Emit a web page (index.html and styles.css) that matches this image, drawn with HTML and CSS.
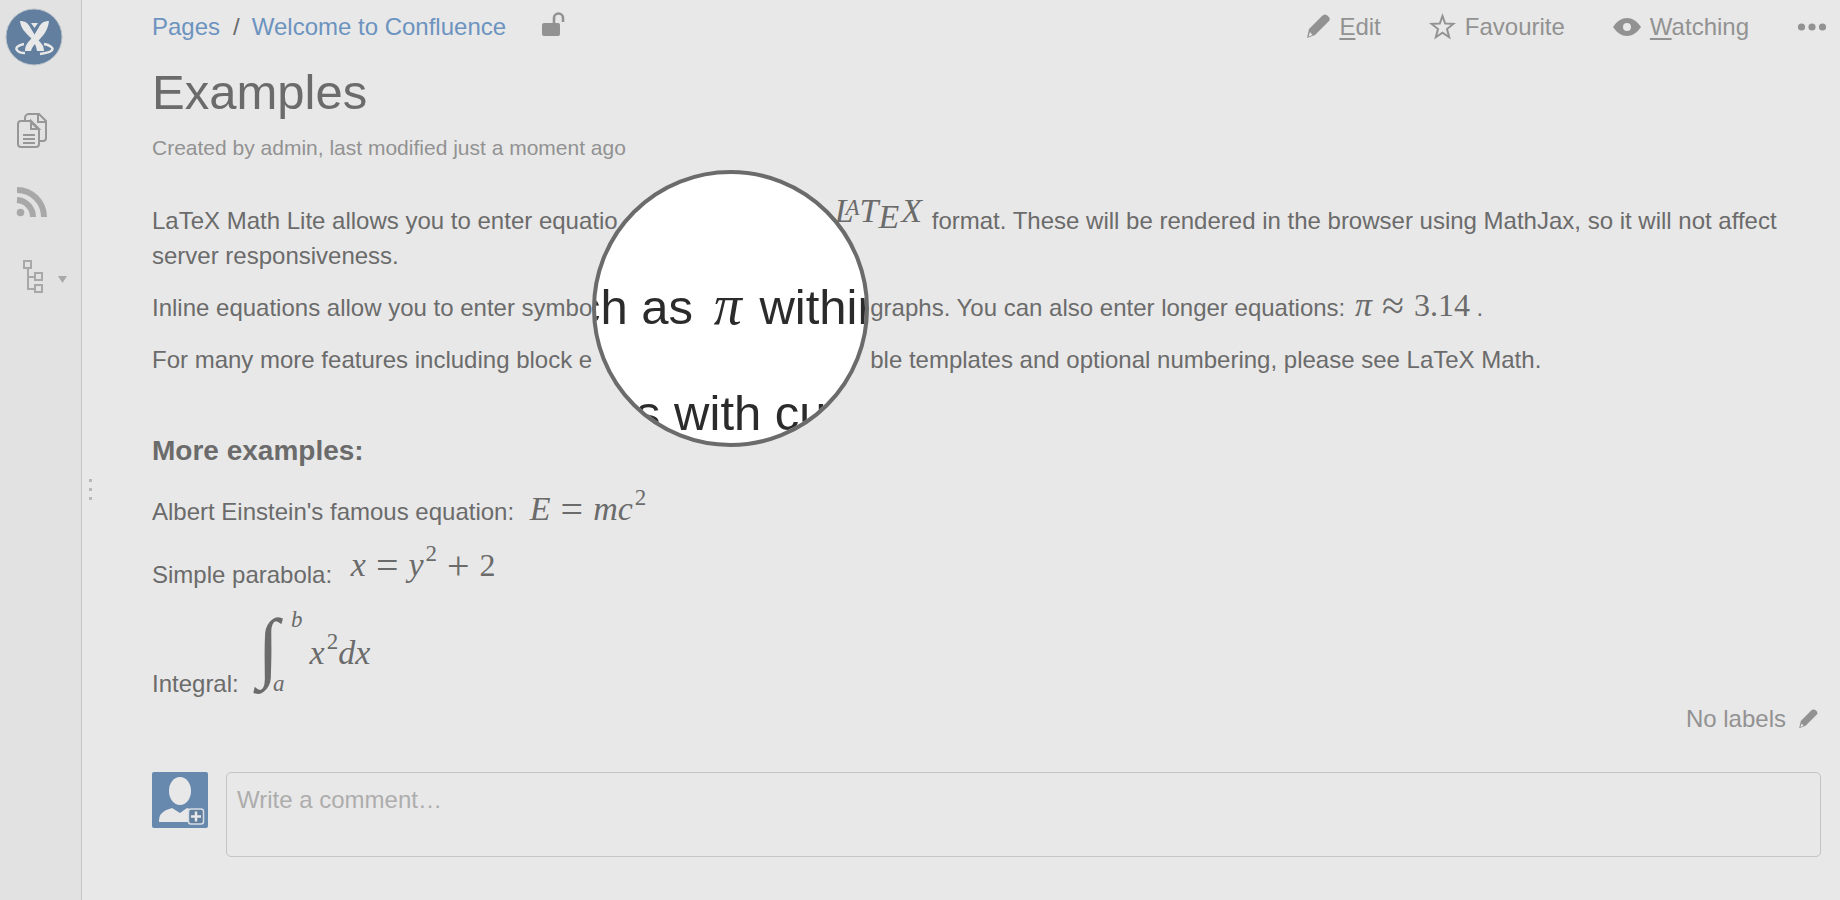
FILE: index.html
```html
<!DOCTYPE html>
<html lang="en">
<head>
<meta charset="utf-8">
<title>Examples</title>
<link rel="stylesheet" href="styles.css">
</head>
<body>
<div class="app">
  <nav class="sidebar" aria-label="Space">
    <a class="logo" href="#" aria-label="Space home">
      <svg width="58" height="58" viewBox="0 0 58 58"><circle cx="29" cy="29" r="28" fill="#627f9f" stroke="#b9c1ca"/><g fill="#e8e8e8"><path d="M15 13c5 0 8 2 10 6l6 10c4 6 8 7 8 14h-7c-1-6-3-9-6-13-6-6-10-9-11-17z"/><path d="M44 13c-5 0-8 2-10 6l-6 10c-5 5-8 8-8 14h6c1-4 3-6 6-9 7-7 11-12 12-21z"/><path d="M26 15h7l-3.500 5z"/></g><path d="M19 36c-6 1-9 4-7 6 1 2 4 3 8 3M39 36c6 1 10 4 8 6-1 2-5 3-12 4" fill="none" stroke="#e8e8e8" stroke-width="2.500"/></svg>
    </a>
    <a class="side-link" href="#" aria-label="Pages">
      <svg width="32" height="36" viewBox="0 0 32 36" fill="none" stroke="#979797" stroke-width="2"><path d="M14 8H5a3 3 0 0 0-3 3v20a3 3 0 0 0 3 3h15a3 3 0 0 0 3-3V17z"/><path d="M15 8v8h8zM9 8V5a4 4 0 0 1 4-4h10l7 7v17a3 3 0 0 1-3 3h-3"/><path d="M22 1v8h8M7 22h12M7 26h12M7 30h12"/></svg>
    </a>
    <a class="side-link" href="#" aria-label="Blog">
      <svg width="32" height="32" viewBox="0 0 32 32"><circle cx="4.500" cy="26.500" r="3.800" fill="#a8a8a8"/><path d="M1 14a17 17 0 0 1 16 17M1 4a27 27 0 0 1 27 27" fill="none" stroke="#a8a8a8" stroke-width="6"/></svg>
    </a>
    <a class="side-link tree" href="#" aria-label="Page tree">
      <svg width="46" height="34" viewBox="0 0 46 34"><path d="M1 1h7v7H1zM12 13h7v7h-7zM12 25h7v7h-7zM5 8v21h7M5 17h7" fill="none" stroke="#a8a8a8" stroke-width="2"/><path d="M35 16h9l-4.500 7z" fill="#a8a8a8"/></svg>
    </a>
  </nav>
  <button class="splitter" type="button" aria-label="Collapse sidebar"><i></i><i></i><i></i></button>
  <main class="content">
    <header class="bar">
      <nav class="crumbs" aria-label="Breadcrumb">
        <a href="#">Pages</a><span class="slash">/</span><a href="#">Welcome to Confluence</a>
        <svg class="lock" width="24" height="26" viewBox="0 0 24 26"><rect x="1" y="12" width="18" height="13" rx="2" fill="#929292"/><path d="M13 13V7a4.500 4.500 0 0 1 9 0v4" fill="none" stroke="#929292" stroke-width="2.600"/></svg>
      </nav>
      <nav class="actions" aria-label="Page actions">
        <a href="#"><svg width="24" height="25" viewBox="0 0 24 25"><path fill="#929292" fill-rule="evenodd" d="M1 24l2-9L16 2q3-3 6 0t1 5L9 21zM2.500 22.500l4-1.500-2.500-3z"/></svg><span><u>E</u>dit</span></a>
        <a href="#"><svg width="27" height="27" viewBox="0 0 27 27"><path fill="none" stroke="#929292" stroke-width="2" d="M13.500 3l2.700 7.500 8.300.3-6.500 5.200 2.200 8.200-6.700-4.600-6.700 4.600L9 16 2.500 10.800l8.300-.3z"/></svg><span>Favourite</span></a>
        <a href="#"><svg width="28" height="20" viewBox="0 0 28 20"><path fill="#929292" fill-rule="evenodd" d="M0 10C8-2 20-2 28 10 20 22 8 22 0 10zm14-4a4 4 0 1 0 0 8 4 4 0 0 0 0-8z"/></svg><span><u>W</u>atching</span></a>
        <button class="more" type="button" aria-label="More"><svg width="30" height="8" viewBox="0 0 30 8" fill="#929292"><circle cx="4.500" cy="4" r="3.600"/><circle cx="15" cy="4" r="3.600"/><circle cx="25.500" cy="4" r="3.600"/></svg></button>
      </nav>
    </header>
    <h1>Examples</h1>
    <p class="meta">Created by admin, last modified just a moment ago</p>
    <article>
      <p>LaTeX Math Lite allows you to enter equatio<span class="gap short"></span><span class="math raised latex">L<span class="la">A</span>T<span class="le">E</span>X</span> format. These will be rendered in the browser using MathJax, so it will not affect server responsiveness.</p>
      <p>Inline equations allow you to enter symbo<span class="gap"></span>graphs. You can also enter longer equations: <span class="math approx">π<span class="op">≈</span><span class="num">3.14</span></span> .</p>
      <p>For many more features including block e<span class="gap"></span>ble templates and optional numbering, please see LaTeX Math.</p>
      <h2>More examples:</h2>
      <div class="example">Albert Einstein's famous equation: <span class="math after">E<span class="op">=</span>mc<sup>2</sup></span></div>
      <div class="example">Simple parabola: <span class="math raised indent">x<span class="op">=</span>y<sup>2</sup><span class="op">+</span><span class="num">2</span></span></div>
      <div class="integral"><span>Integral:</span><span class="math int">∫</span><span class="math limits"><span class="upper">b</span><span>a</span></span><span class="math integrand">x<sup>2</sup>dx</span></div>
    </article>
    <div class="labels">No labels <button type="button" aria-label="Edit labels"><svg width="20" height="20" viewBox="0 0 24 25"><path fill="#929292" fill-rule="evenodd" d="M1 24l2-9L16 2q3-3 6 0t1 5L9 21zM2.500 22.500l4-1.500-2.500-3z"/></svg></button></div>
    <form class="comment">
      <svg class="avatar" width="56" height="56" viewBox="0 0 56 56"><rect width="56" height="56" rx="2" fill="#6889ae"/><ellipse cx="28" cy="19" rx="11" ry="14" fill="#e8e8e8"/><path d="M7 50c0-8 3-11 13-14l8 5 7-5c10 3 13 6 13 14z" fill="#e8e8e8"/><rect x="36.500" y="37" width="15" height="15" rx="2.500" fill="#627f9f" stroke="#d6dce4" stroke-width="1.500"/><path d="M44 39.500v10M39 44.500h10" stroke="#e8e8e8" stroke-width="2.500"/></svg>
      <textarea aria-label="Comment" placeholder="Write a comment…"></textarea>
    </form>
    <div class="lens">
      <div class="zoomed first">ch as <span class="pi">π</span> within</div>
      <div class="zoomed second">s with cu</div>
    </div>
  </main>
</div>
</body>
</html>
```
FILE: styles.css
```css
* { box-sizing: border-box; }
body {
  margin: 0;
  background: #e8e8e8;
  color: #6b6b6b;
  font: 24px/35px "Liberation Sans", Arial, sans-serif;
}
a { text-decoration: none; color: inherit; }
button { border: 0; padding: 0; background: none; }
svg { display: block; flex: none; }
.app { display: flex; min-height: 100vh; }
.sidebar {
  flex: none;
  width: 82px;
  padding: 8px 0 0 16px;
  background: #e2e2e2;
  border-right: 1px solid #c4c4c4;
  display: flex;
  flex-direction: column;
  align-items: flex-start;
}
.logo { margin: 0 0 47px -11px; }
.side-link { margin-bottom: 37px; }
.side-link.tree { margin: 5px 0 0 7px; }
.splitter {
  flex: none;
  width: 16px;
  padding-top: 78px;
  display: flex;
  flex-direction: column;
  align-items: center;
  justify-content: center;
  gap: 6px;
}
.splitter i { width: 3px; height: 3px; background: #b9b9b9; }
.content { position: relative; flex: 1; min-width: 0; padding: 0 19px 0 54px; }
.bar { display: flex; justify-content: space-between; align-items: center; height: 53px; }
.crumbs { display: flex; align-items: center; color: #6b6b6b; }
.crumbs a { color: #6c93bf; }
.slash { margin: 0 12px 0 13px; }
.lock { margin: -5px 0 0 35px; }
.actions { display: flex; align-items: center; color: #929292; margin-right: -6px; }
.actions a { display: flex; align-items: center; gap: 9px; margin-right: 48px; }
.actions u { text-decoration-thickness: 2px; text-underline-offset: 3px; }
h1 { margin: 11px 0 14px; font-size: 49px; line-height: 56px; font-weight: 400; }
.meta { margin: 0 0 41px; color: #929292; font-size: 21px; line-height: 28px; }
article p { margin: 0 0 17px; }
h2 { margin: 56px 0 25px; font-size: 28px; line-height: 36px; }
.example { margin-bottom: 25px; }
.gap { display: inline-block; width: 278px; }
.gap.short { width: 217px; }
.math {
  font: italic 34px/0 "Liberation Serif", "Times New Roman", serif;
  white-space: nowrap;
}
.math sup { font-size: 23px; line-height: 0; font-style: normal; vertical-align: 15px; margin-left: 2px; }
.num { font-size: 32px; font-style: normal; }
.op { margin: 0 10px; font-size: 40px; font-style: normal; vertical-align: -3px; }
.raised { vertical-align: 7px; }
.after { margin-left: 9px; }
.indent { margin-left: 12px; }
.approx { margin-left: 3px; }
.latex { margin-right: 3px; }
.la { font-size: 23px; vertical-align: 7px; margin: 0 0 0 -8px; }
.le { vertical-align: -6px; margin-right: 2px; }
.integral { display: flex; align-items: flex-end; margin-top: -9px; line-height: 28px; }
.int { margin: 0 -6px 12px 19px; font-size: 78px; line-height: 78px; }
.limits {
  display: flex;
  flex-direction: column;
  justify-content: space-between;
  height: 88px;
  margin-bottom: 2px;
  font-size: 23px;
  line-height: 24px;
}
.upper { margin-left: 18px; }
.integrand { margin: 0 0 28px 7px; line-height: 35px; }
.labels {
  display: flex;
  justify-content: flex-end;
  align-items: center;
  gap: 12px;
  margin-top: 9px;
  padding-right: 3px;
  color: #929292;
  line-height: 24px;
}
.comment { display: flex; align-items: flex-start; gap: 18px; margin: 41px 0 0; }
textarea {
  flex: 1;
  height: 85px;
  padding: 9px 10px;
  border: 1px solid #c4c4c4;
  border-radius: 5px;
  background: transparent;
  color: inherit;
  font: inherit;
  resize: none;
}
textarea::placeholder { color: #adadad; }
.lens {
  position: absolute;
  top: 170px;
  left: 494px;
  width: 277px;
  height: 277px;
  overflow: hidden;
  border: 4px solid #6b6b6b;
  border-radius: 50%;
  background: #fff;
  color: #2b2b2b;
  font-size: 49px;
  line-height: 106px;
  white-space: nowrap;
}
.zoomed.first { margin: 80px 0 0 -20px; }
.zoomed.second { margin-left: 40px; }
.pi { margin: 0 4px 0 7px; font: italic 56px/0 "Liberation Serif", serif; }
```
